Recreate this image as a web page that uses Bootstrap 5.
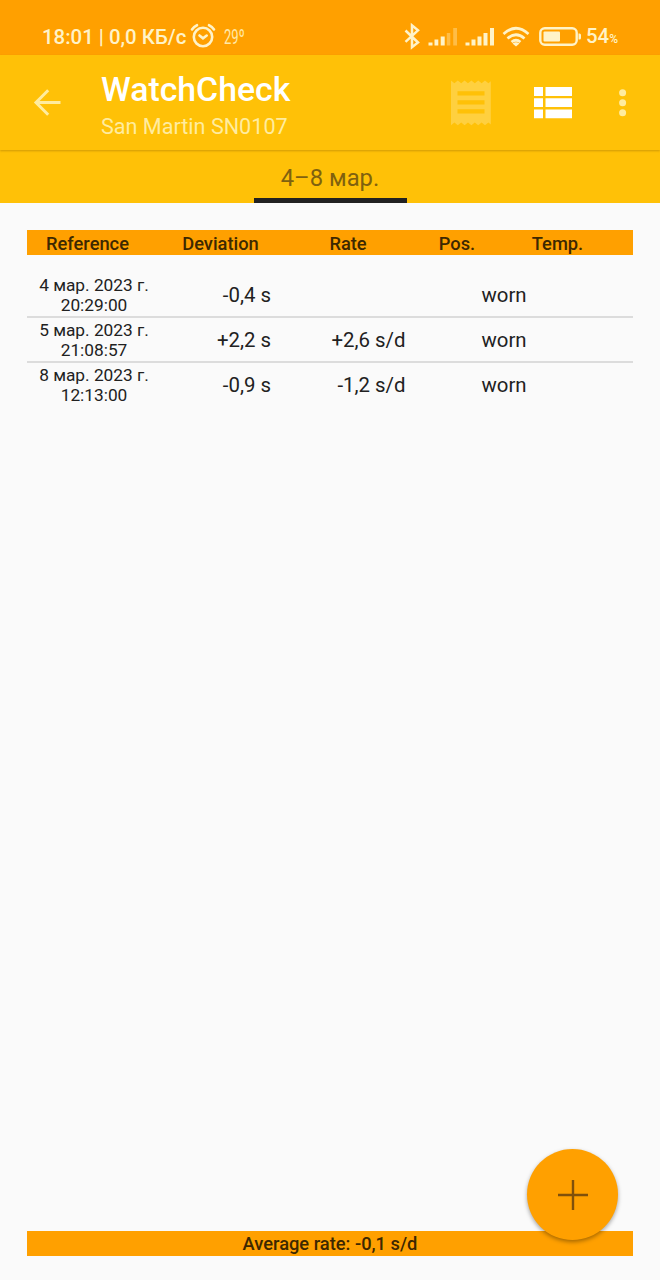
<!DOCTYPE html>
<html lang="ru">
<head>
<meta charset="utf-8">
<meta name="viewport" content="width=device-width, initial-scale=1">
<title>WatchCheck</title>
<link href="https://cdn.jsdelivr.net/npm/bootstrap@5.3.0/dist/css/bootstrap.min.css" rel="stylesheet">
<style>
  body { font-family: Roboto, "Liberation Sans", sans-serif; background: #fafafa; color: #212121; height: 1280px; overflow: hidden; }
  svg { display: block; flex: none; }
  .status { height: 55px; background: #ffa000; color: #fff3c8; padding: 17px 42px 0 42px; line-height: 38px; font-size: 20.4px; font-weight: 500; }
  .status > div { height: 38px; }
  .status span { padding-top: 1px; }
  .status .battery { padding-top: 2px; }
  .pct { font-size: 12px; }
  .deg { font-size: 21px; font-weight: 400; display: inline-block; transform: scaleX(.62); transform-origin: left; width: 22px; margin-left: 8px; white-space: nowrap; color: #ffe9a8; }
  .appbar { height: 95px; background: #ffc107; padding: 0 0 0 30px; position: relative; box-shadow: 0 1px 2px rgba(120,80,0,.35); }
  .titles { margin-left: 36px; padding-top: 14px; }
  .app-title { font-size: 33.8px; line-height: 41px; font-weight: 500; color: #fff; margin: 0; }
  .app-sub { font-size: 21.6px; line-height: 30px; color: #ffec9f; margin-top: 2px; }
  .tabs { height: 53px; background: #ffc107; }
  .tab-item { width: 153px; height: 53px; border-bottom: 5px solid #212121; color: #80610f; font-size: 23.8px; line-height: 57px; }
  .sheet { padding: 27px 27px 0; }
  .band { background: #ffa000; color: #3d2800; height: 25px; line-height: 27px; font-size: 18.3px; font-weight: 500; }
  .foot .band { line-height: 26px; }
  .head-grid { display: grid; grid-template-columns: 121px 145px 110px 108px 93px; text-align: center; }
  .log { padding-top: 17px; }
  .entry { display: grid; grid-template-columns: 134px 110px 134.5px 197px; height: 45px; align-items: center; font-size: 20.4px; border-bottom: 2px solid #dcdcdc; line-height: 30px; }
  .entry:first-child { height: 46px; }
  .entry > :not(.stamp) { padding-top: 1px; }
  .entry:first-child > :not(.stamp) { padding-top: 2px; }
  .entry:last-child { border-color: transparent; }
  .stamp { font-size: 17.3px; line-height: 20px; padding-top: 1px; }
  .foot { padding: 0 27px 24.5px; }
  .fab { position: absolute; right: 42px; bottom: 40px; width: 91px; height: 91px; background: #ffa000; box-shadow: 0 2px 4px rgba(0,0,0,.35); }
</style>
</head>
<body class="d-flex flex-column position-relative">
<div class="status d-flex justify-content-between">
  <div class="d-flex align-items-center">
    <span class="text-nowrap">18:01 | 0,0 КБ/с</span>
    <svg style="margin-left:4px" width="26" height="26" viewBox="0 0 26 26" fill="none" stroke="#fff3c8" stroke-width="2.6" stroke-linecap="round"><circle cx="13" cy="14" r="9.2"/><path d="M2 6.500Q4 3.500 7 2.200M19 2.200Q22 3.500 24 6.500M9.500 12.500 13 15.300l3.700-2.800"/></svg>
    <span class="deg">29º</span>
  </div>
  <div class="d-flex align-items-center">
    <svg width="215" height="30" viewBox="402 21 215 30" style="margin-right:-32px" fill="#fff3c8">
      <path d="M404.500 30.500 417 42.500 411 47.200V25.300L417 30.300 404.500 41.800" fill="none" stroke="#fff3c8" stroke-width="2.500"/>
      <path d="M427.500 42.500h4v3h-4zM433.500 39.500h3.800v6h-3.800zM439.700 36.500h4v9h-4z"/>
      <path d="M445.800 33h3.500v12.500h-3.500zM452.200 28h3.800v17.500h-3.800z" opacity=".35"/>
      <path d="M464.500 42.500h4v3h-4zM470.500 39.500h4v6h-4zM476.500 36.500h4v9h-4zM482.500 33h4v12.500h-4zM489 28h4v17.500h-4z"/>
      <path d="M502.500 34q12.500-11.500 25 0M506.500 38.500q8.500-7.500 17 0M510.500 42q4.500-3.500 9 0" fill="none" stroke="#fff3c8" stroke-width="2.700"/><path d="M511.500 43.500q3.500-2.500 7 0L515 46.500z"/>
      <rect x="539.300" y="28.300" width="36.400" height="16.400" rx="4.500" fill="none" stroke="#fff3c8" stroke-width="2.400"/><rect x="542.500" y="31.500" width="16.500" height="10" rx="1"/><path d="M577.500 33.500h1q1.500 0 1.500 1.500v3q0 1.500-1.500 1.500h-1z"/>
    </svg>
    <span class="battery text-nowrap">54<span class="pct">%</span></span>
  </div>
</div>
<header class="appbar d-flex">
  <svg class="mt-4" width="35" height="46" viewBox="30 79 35 46" fill="none" stroke="#ffec9f" stroke-width="3"><path d="M60.500 102.500H36M48.200 90.300 36 102.500l12.200 12.200"/></svg>
  <div class="titles">
    <h1 class="app-title">WatchCheck</h1>
    <div class="app-sub">San Martin SN0107</div>
  </div>
  <svg class="ms-auto" width="230" height="90" viewBox="430 55 230 90">
    <path fill="#ffd03f" fill-rule="evenodd" d="M451 80.500l3.400 2.800 3.400-2.800 3.400 2.800 3.400-2.800 3.400 2.800 3.400-2.800 3.400 2.800 3.400-2.800 3.400 2.800 3.400-2.800 3.400 2.800 2.400-2V124.500l-2.400-2-3.400 2.800-3.400-2.800-3.400 2.800-3.400-2.800-3.400 2.800-3.400-2.800-3.400 2.800-3.400-2.800-3.400 2.800-3.400-2.800-3.400 2.800zM457.500 91.200v4.300h27v-4.300zM457.500 100.200v4.300h27v-4.300zM457.500 109.200v4.300h27v-4.300z"/>
    <path fill="#fff" d="M534 87h9v9h-9zM545.500 87H572v9h-26.500zM534 98.200h9v8.800h-9zM545.500 98.200H572v8.800h-26.500zM534 109.400h9v8.800h-9zM545.500 109.400H572v8.800h-26.500z"/>
    <g fill="#ffec9f"><circle cx="622.600" cy="92.700" r="3.500"/><circle cx="622.600" cy="102.700" r="3.500"/><circle cx="622.600" cy="112.700" r="3.500"/></g>
  </svg>
</header>
<nav class="tabs d-flex justify-content-center"><div class="tab-item text-center">4–8 мар.</div></nav>
<main class="sheet flex-grow-1">
  <div class="band head-grid"><span>Reference</span><span>Deviation</span><span>Rate</span><span>Pos.</span><span>Temp.</span></div>
  <div class="log">
    <div class="entry"><div class="stamp text-center">4 мар. 2023 г.<br>20:29:00</div><div class="text-end">-0,4 s</div><div></div><div class="text-center">worn</div></div>
    <div class="entry"><div class="stamp text-center">5 мар. 2023 г.<br>21:08:57</div><div class="text-end">+2,2 s</div><div class="text-end">+2,6 s/d</div><div class="text-center">worn</div></div>
    <div class="entry"><div class="stamp text-center">8 мар. 2023 г.<br>12:13:00</div><div class="text-end">-0,9 s</div><div class="text-end">-1,2 s/d</div><div class="text-center">worn</div></div>
  </div>
</main>
<footer class="foot"><div class="band text-center">Average rate: -0,1 s/d</div></footer>
<button class="fab btn rounded-circle border-0 p-0 d-flex align-items-center justify-content-center" aria-label="Add">
  <svg width="30" height="30" viewBox="0 0 30 30" stroke="#80500b" stroke-width="2.400"><path d="M0 15h30M15 0v30"/></svg>
</button>
<script src="https://cdn.jsdelivr.net/npm/bootstrap@5.3.0/dist/js/bootstrap.bundle.min.js"></script>
</body>
</html>
